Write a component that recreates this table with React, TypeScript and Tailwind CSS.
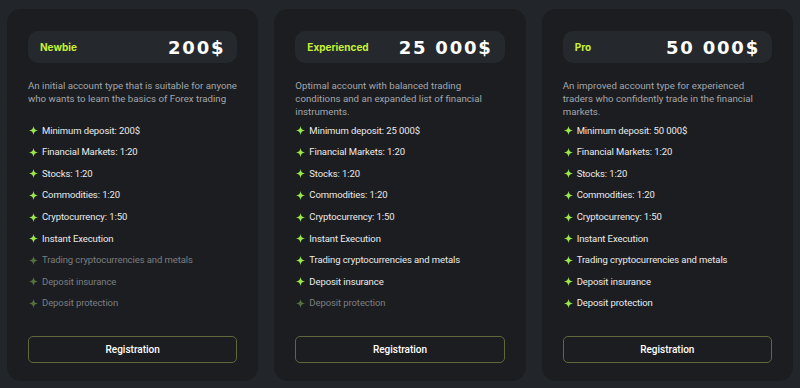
import React from 'react';

interface Plan {
  name: string;
  price: string;
  desc: string;
  features: { label: string; on: boolean }[];
}

const featureNames = [
  'Minimum deposit',
  'Financial Markets: 1:20',
  'Stocks: 1:20',
  'Commodities: 1:20',
  'Cryptocurrency: 1:50',
  'Instant Execution',
  'Trading cryptocurrencies and metals',
  'Deposit insurance',
  'Deposit protection',
];

const makeFeatures = (deposit: string, enabled: number) =>
  featureNames.map((f, i) => ({
    label: i === 0 ? `${f}: ${deposit}` : f,
    on: i < enabled,
  }));

const plans: Plan[] = [
  {
    name: 'Newbie',
    price: '200$',
    desc: 'An initial account type that is suitable for anyone\nwho wants to learn the basics of Forex trading',
    features: makeFeatures('200$', 6),
  },
  {
    name: 'Experienced',
    price: '25 000$',
    desc: 'Optimal account with balanced trading\nconditions and an expanded list of financial\ninstruments.',
    features: makeFeatures('25 000$', 8),
  },
  {
    name: 'Pro',
    price: '50 000$',
    desc: 'An improved account type for experienced\ntraders who confidently trade in the financial\nmarkets.',
    features: makeFeatures('50 000$', 9),
  },
];

const Sparkle = ({ on }: { on: boolean }) => (
  <svg viewBox="0 0 10 10" className="w-[9px] h-[9px] shrink-0">
    <path
      d="M5 0 C5.4 3.2 6.8 4.6 10 5 C6.8 5.4 5.4 6.8 5 10 C4.6 6.8 3.2 5.4 0 5 C3.2 4.6 4.6 3.2 5 0 Z"
      fill={on ? '#9be84a' : '#55703e'}
    />
  </svg>
);

const PlanCard = ({ plan }: { plan: Plan }) => (
  <div className="flex-1 flex flex-col rounded-[14px] bg-[#1b1d21] px-[21px] pt-[22px] pb-[18px]">
    <div className="h-[32px] flex items-center justify-between rounded-[10px] bg-[#25282c] pl-3 pr-3">
      <span className="text-[10px] font-bold text-[#c6f135] font-['Inter',sans-serif]">{plan.name}</span>
      <span className="text-[18px] font-bold tracking-[0.1em] text-white font-['DejaVu_Sans',sans-serif]">
        {plan.price}
      </span>
    </div>

    <p className="mt-[16px] h-[44px] whitespace-pre-line text-[9.7px] leading-[13px] text-[#a3a6aa] font-['Roboto',sans-serif]">
      {plan.desc}
    </p>

    <ul className="mt-[1px] flex flex-col gap-[8px]">
      {plan.features.map((f) => (
        <li key={f.label} className="flex items-center gap-[4px] pl-[1px] h-[13.6px]">
          <Sparkle on={f.on} />
          <span
            className={`text-[9.5px] tracking-[-0.01em] font-['Roboto',sans-serif] ${f.on ? 'text-[#ebebeb]' : 'text-[#7b7e82]'}`}
          >
            {f.label}
          </span>
        </li>
      ))}
    </ul>

    <button className="mt-auto h-[27px] rounded-[5px] border border-[#62663c] text-[10px] font-medium text-white font-['Roboto',sans-serif]">
      Registration
    </button>
  </div>
);

export default function App() {
  return (
    <div className="w-[800px] h-[388px] bg-[#22262a] flex gap-4 px-[7px] pt-[9px] pb-[7px]">
      {plans.map((p) => (
        <PlanCard key={p.name} plan={p} />
      ))}
    </div>
  );
}
